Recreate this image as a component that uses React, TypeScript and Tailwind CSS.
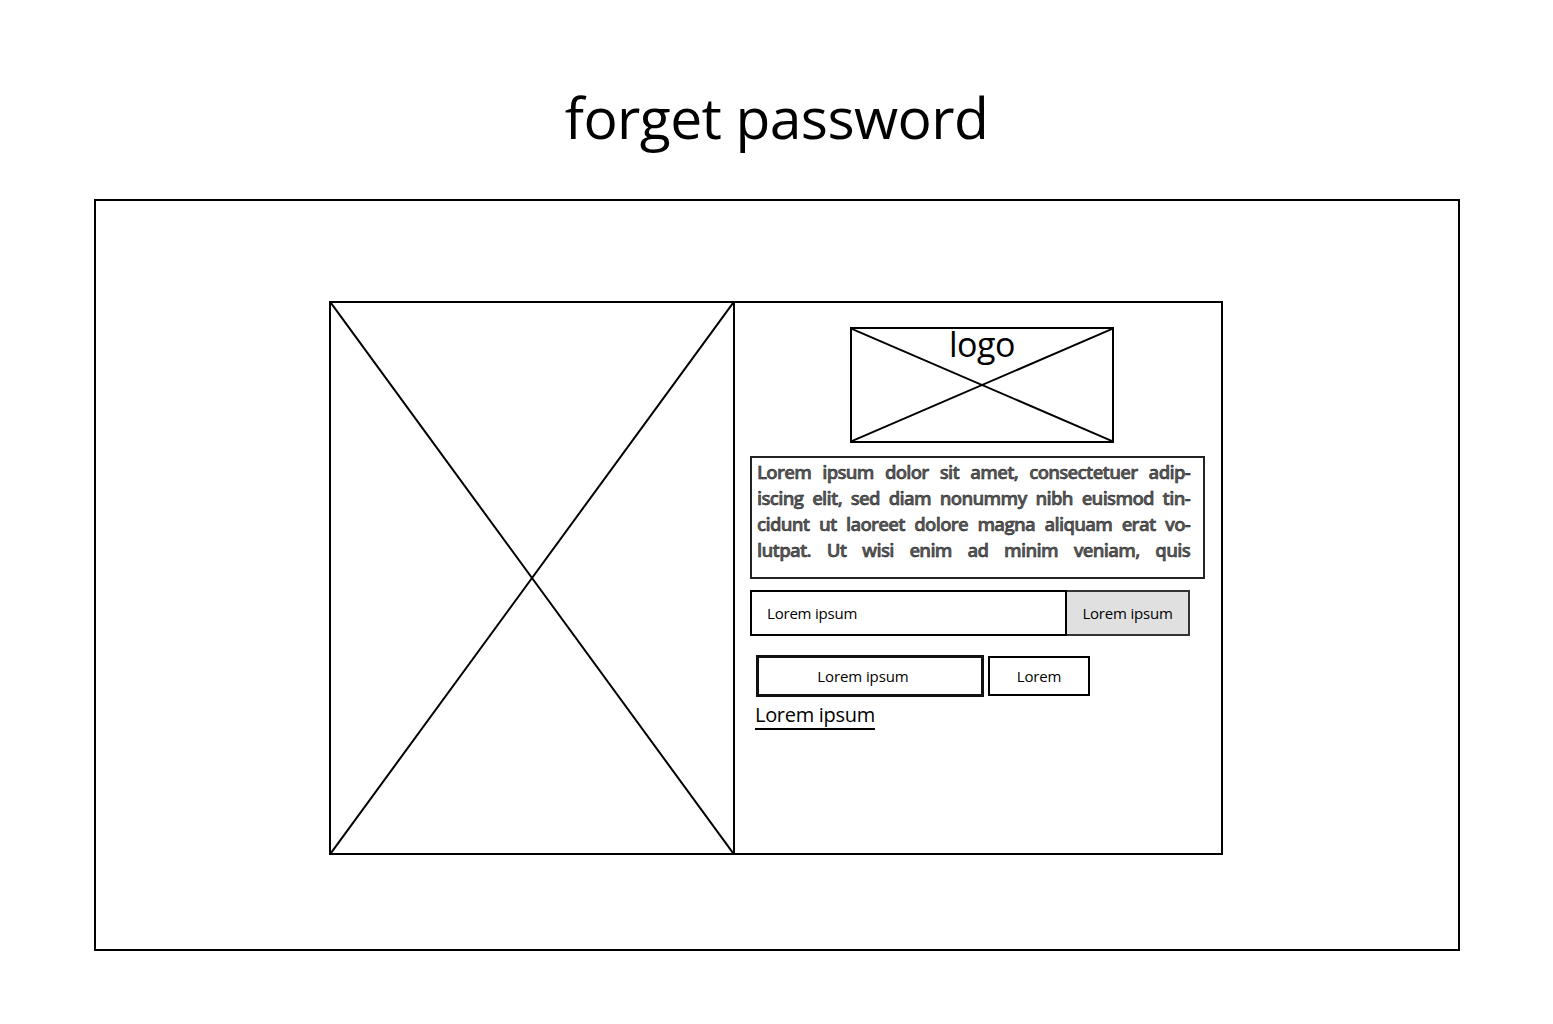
import React from "react";

const font = { fontFamily: '"Open Sans", "Noto Sans", sans-serif' };

function Cross({ className = "" }: { className?: string }) {
  return (
    <svg
      className={`absolute inset-0 h-full w-full ${className}`}
      viewBox="0 0 100 100"
      preserveAspectRatio="none"
    >
      <line x1="0" y1="0" x2="100" y2="100" stroke="#000" strokeWidth="2" vectorEffect="non-scaling-stroke" />
      <line x1="100" y1="0" x2="0" y2="100" stroke="#000" strokeWidth="2" vectorEffect="non-scaling-stroke" />
    </svg>
  );
}

const lines = [
  "Lorem ipsum dolor sit amet, consectetuer adip-",
  "iscing elit, sed diam nonummy nibh euismod tin-",
  "cidunt ut laoreet dolore magna aliquam erat vo-",
  "lutpat. Ut wisi enim ad minim veniam, quis",
];

export default function App() {
  return (
    <div className="min-h-screen w-[1553px] bg-white text-black" style={font}>
      <h1 className="pt-[76px] text-center text-[57px] leading-[82px] tracking-[-0.6px]">forget password</h1>

      <div className="ml-[94px] mt-[41px] flex h-[752px] w-[1366px] items-start border-2 border-black pt-[100px]">
        <div className="ml-[233px] flex h-[554px] w-[894px] border-2 border-black">
          {/* image placeholder */}
          <div className="relative w-[404px] shrink-0 border-r-2 border-black">
            <Cross />
          </div>

          {/* form side */}
          <div className="flex flex-1 flex-col pl-[15px] pt-[24px]">
            <div className="relative ml-[100px] h-[116px] w-[264px] border-2 border-black">
              <Cross />
              <div className="relative -mt-[2px] text-center text-[34px] leading-[34px] tracking-[-0.5px]">logo</div>
            </div>

            <div className="mt-[13px] h-[123px] w-[455px] overflow-hidden border-2 border-[#222] pl-[5px] pr-[13px] pt-[1px]">
              {lines.map((l) => (
                <div
                  key={l}
                  className="text-justify text-[18.5px] font-semibold leading-[26px] tracking-[-0.7px] text-[#5a5a5a] [-webkit-text-stroke:0.45px_#111] [text-align-last:justify]"
                >
                  {l}
                </div>
              ))}
            </div>

            <div className="mt-[11px] flex h-[46px] w-[440px]">
              <div className="flex flex-1 items-center border-2 border-black pl-[15px] text-[15px] tracking-[-0.2px]">
                Lorem ipsum
              </div>
              <div className="flex w-[123px] items-center justify-center border-2 border-l-0 border-[#333] bg-[#e0e0e0] text-[15px] tracking-[-0.2px]">
                Lorem ipsum
              </div>
            </div>

            <div className="ml-[6px] mt-[19px] flex items-center gap-[4px]">
              <div className="flex h-[42px] w-[228px] items-center justify-center border-[3px] border-[#111] pr-[14px] text-[15px] tracking-[-0.1px]">
                Lorem ipsum
              </div>
              <div className="flex h-[40px] w-[102px] items-center justify-center border-2 border-black text-[15px] tracking-[-0.2px]">
                Lorem
              </div>
            </div>

            <div className="ml-[5px] mt-[5px] w-fit border-b-2 border-black text-[20px] leading-[26px] tracking-[-0.3px]">
              Lorem ipsum
            </div>
          </div>
        </div>
      </div>
    </div>
  );
}
